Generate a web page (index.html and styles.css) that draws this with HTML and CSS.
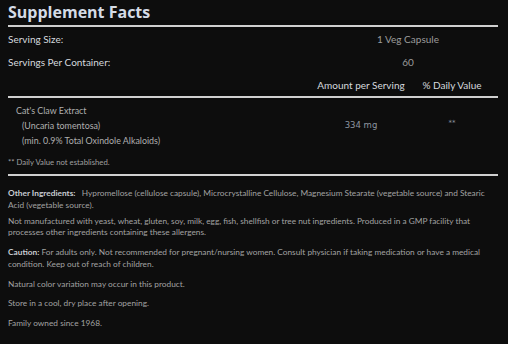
FILE: index.html
```html
<!DOCTYPE html>
<html>
<head>
<meta charset="utf-8">
<link rel="stylesheet" href="styles.css">
</head>
<body>
<div class="facts">
  <h1 class="title">Supplement Facts</h1>
  <div class="rule"></div>
  <div class="serv-row"><span class="label">Serving Size:</span><span class="serv-val">1 Veg Capsule</span></div>
  <div class="serv-row"><span class="label">Servings Per Container:</span><span class="serv-val">60</span></div>
  <div class="head-row"><span></span><span class="col-amt">Amount per Serving</span><span class="col-dv">% Daily Value</span></div>
  <div class="rule"></div>
  <div class="ing-row">
    <div class="ing-name">
      <div class="ing-main">Cat's Claw Extract</div>
      <div class="ing-sub">(Uncaria tomentosa)</div>
      <div class="ing-sub">(min. 0.9% Total Oxindole Alkaloids)</div>
    </div>
    <div class="ing-amt">334 mg</div>
    <div class="ing-dv">**</div>
  </div>
  <div class="note">** Daily Value not established.</div>
  <div class="rule"></div>
  <div class="info">
    <p class="p-first"><strong>Other Ingredients:</strong>&nbsp;&nbsp; Hypromellose (cellulose capsule), Microcrystalline Cellulose, Magnesium Stearate (vegetable source) and Stearic Acid (vegetable source).</p>
    <p class="p-second">Not manufactured with yeast, wheat, gluten, soy, milk, egg, fish, shellfish or tree nut ingredients. Produced in a GMP facility that processes other ingredients containing these allergens.</p>
    <p class="p-gap"><strong>Caution:</strong> For adults only. Not recommended for pregnant/nursing women. Consult physician if taking medication or have a medical condition. Keep out of reach of children.</p>
    <p class="p-gap">Natural color variation may occur in this product.</p>
    <p class="p-store">Store in a cool, dry place after opening.</p>
    <p class="p-gap">Family owned since 1968.</p>
  </div>
</div>
</body>
</html>
```

FILE: styles.css
```css
html, body {
  margin: 0;
  padding: 0;
  background: #0d0d0d;
}
body {
  font-family: Lato, "Open Sans", sans-serif;
  color: #a8a8a8;
}
.facts {
  width: 490px;
  margin-left: 8px;
}
.title {
  margin: 0;
  font-family: "Open Sans", Lato, sans-serif;
  font-size: 16px;
  font-weight: 700;
  color: #d4dbe6;
  line-height: 25px;
  height: 25px;
}
.rule {
  height: 2px;
  background: #cfcfcf;
}
.serv-row {
  display: grid;
  grid-template-columns: 1fr 180px;
  height: 23px;
  align-items: center;
  font-size: 10px;
}
.label {
  color: #d5d9de;
}
.serv-val {
  text-align: center;
  color: #9c9c9c;
}
.head-row {
  display: grid;
  grid-template-columns: 1fr 104px 78px;
  padding-right: 7px;
  height: 23px;
  align-items: center;
  font-size: 10px;
  color: #d5d9de;
}
.col-amt, .col-dv {
  text-align: center;
}
.ing-row {
  display: grid;
  grid-template-columns: 1fr 104px 78px;
  padding-right: 7px;
  padding-top: 5px;
  font-size: 8.9px;
  line-height: 15px;
}
.ing-name {
  color: #b0b0b0;
}
.ing-main {
  padding-left: 8px;
}
.ing-sub {
  padding-left: 14px;
}
.ing-amt {
  text-align: center;
  padding-top: 15px;
  font-family: "DejaVu Sans", sans-serif;
  font-size: 8.5px;
  color: #8d96a0;
}
.ing-dv {
  text-align: center;
  padding-top: 13px;
  font-family: "DejaVu Sans", sans-serif;
  font-size: 7px;
  color: #8d96a0;
}
.note {
  font-size: 7.75px;
  line-height: 10px;
  margin-top: 9px;
  margin-bottom: 7px;
  color: #a0a0a0;
}
.info {
  padding-top: 12px;
  font-size: 8.3px;
  line-height: 11.5px;
  color: #a2a2a2;
}
.info p {
  margin: 0;
}
.info strong {
  font-weight: 700;
  color: #c8ccd2;
}
.p-second {
  margin-top: 4.5px !important;
}
.p-gap {
  margin-top: 8.5px !important;
}
.p-store {
  margin-top: 7.5px !important;
}
```
